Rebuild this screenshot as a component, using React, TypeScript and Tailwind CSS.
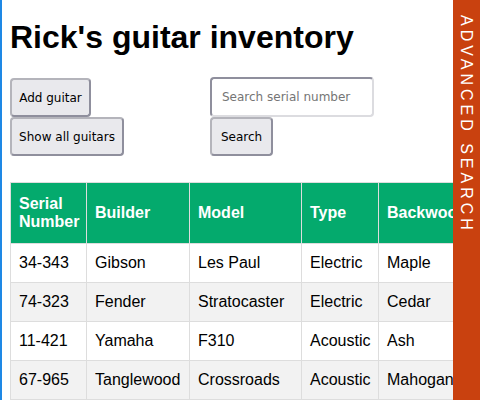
const guitars = [
  { serial: '34-343', builder: 'Gibson', model: 'Les Paul', type: 'Electric', backwood: 'Maple' },
  { serial: '74-323', builder: 'Fender', model: 'Stratocaster', type: 'Electric', backwood: 'Cedar' },
  { serial: '11-421', builder: 'Yamaha', model: 'F310', type: 'Acoustic', backwood: 'Ash' },
  { serial: '67-965', builder: 'Tanglewood', model: 'Crossroads', type: 'Acoustic', backwood: 'Mahogany' },
];

const btn =
  "flex items-center justify-center h-[39px] rounded-[4px] border-2 border-[#b4b4bb] border-r-[#8f8f9d] border-b-[#8f8f9d] bg-[#e9e9ed] text-[12px] text-black font-['DejaVu_Sans',sans-serif]";

export default function App() {
  return (
    <div className="relative h-[400px] w-[480px] overflow-hidden border-l-2 border-[#1e88e5] bg-white">
      <div className="pl-2 pt-[19px]">
        <h1 className="text-[32px] leading-[37px] font-bold text-black font-['Liberation_Sans',Arial,sans-serif]">
          Rick's guitar inventory
        </h1>

        <div className="mt-[22px] grid grid-cols-[200px_200px]">
          <div className="flex flex-col items-start">
            <button className={btn + " w-[81px]"}>Add guitar</button>
            <button className={btn + " w-[114px]"}>Show all guitars</button>
          </div>
          <div className="flex flex-col items-start">
            <input
              type="text"
              placeholder="Search serial number"
              className="-mt-px h-[40px] w-[164px] rounded-[4px] border-2 border-[#8f8f9d] border-r-[#dcdce0] border-b-[#dcdce0] bg-white px-[10px] text-[12px] text-black placeholder:text-[#757575] outline-none font-['DejaVu_Sans',sans-serif]"
            />
            <button className={btn + " w-[63px]"}>Search</button>
          </div>
        </div>

        <table className="mt-[26px] w-[488px] table-fixed border-collapse text-[16px] text-black font-['Liberation_Sans',Arial,sans-serif]">
          <colgroup>
            <col className="w-[76px]" />
            <col className="w-[103px]" />
            <col className="w-[112px]" />
            <col className="w-[77px]" />
            <col className="w-[120px]" />
          </colgroup>
          <thead>
            <tr className="h-[61px] bg-[#04aa6d] text-white">
              <th className="border border-[#ddd] px-2 text-left font-bold leading-[18px]">Serial Number</th>
              <th className="border border-[#ddd] px-2 text-left font-bold">Builder</th>
              <th className="border border-[#ddd] px-2 text-left font-bold">Model</th>
              <th className="border border-[#ddd] px-2 text-left font-bold">Type</th>
              <th className="border border-[#ddd] px-2 text-left font-bold">Backwood</th>
            </tr>
          </thead>
          <tbody>
            {guitars.map((g, i) => (
              <tr key={g.serial} className={i % 2 === 1 ? 'h-[39px] bg-[#f2f2f2]' : 'h-[39px] bg-white'}>
                <td className="border border-[#ddd] px-2 whitespace-nowrap">{g.serial}</td>
                <td className="border border-[#ddd] px-2 whitespace-nowrap">{g.builder}</td>
                <td className="border border-[#ddd] px-2 whitespace-nowrap">{g.model}</td>
                <td className="border border-[#ddd] px-2 whitespace-nowrap">{g.type}</td>
                <td className="border border-[#ddd] px-2 whitespace-nowrap">{g.backwood}</td>
              </tr>
            ))}
          </tbody>
        </table>
      </div>

      <div className="absolute right-0 top-0 flex h-full w-[27px] justify-center bg-[#c9410f]">
        <span className="pt-[15px] text-[16px] leading-[27px] tracking-[4px] text-white [writing-mode:vertical-rl] font-['Liberation_Sans',Arial,sans-serif]">
          ADVANCED SEARCH
        </span>
      </div>
    </div>
  );
}
